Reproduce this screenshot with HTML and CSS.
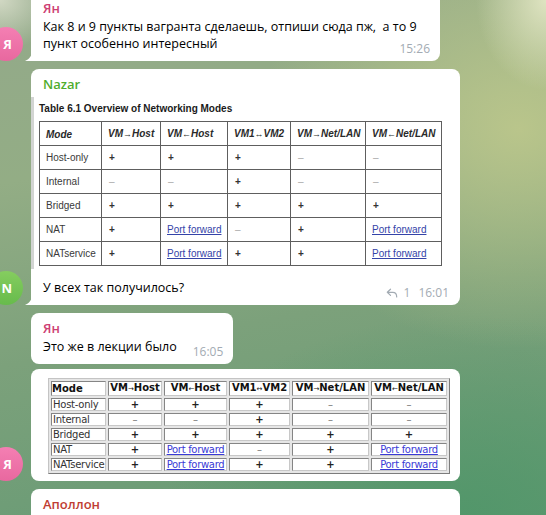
FILE: index.html
```html
<!DOCTYPE html>
<html lang="ru">
<head>
<meta charset="utf-8">
<title>Chat</title>
<link rel="stylesheet" href="styles.css">
</head>
<body>
<div class="chat">
  <div class="group group-first">
    <div class="avatar av-pink">Я</div>
    <div class="stack">
      <div class="bubble bubble-tail bubble-wide">
        <svg class="tail" width="7" height="10" viewBox="0 0 7 10"><path d="M7 0 C7 5 4 8.5 0 10 H7 Z" fill="#fff"/></svg>
        <div class="name c-pink">Ян</div>
        <div class="text">Как 8 и 9 пункты вагранта сделаешь, отпиши сюда пж,&nbsp; а то 9<br>пункт особенно интересный<span class="meta">15:26</span></div>
      </div>
    </div>
  </div>

  <div class="group">
    <div class="avatar av-green">N</div>
    <div class="stack">
      <div class="bubble bubble-tail bubble-media-caption">
        <svg class="tail" width="7" height="10" viewBox="0 0 7 10"><path d="M7 0 C7 5 4 8.5 0 10 H7 Z" fill="#fff"/></svg>
        <div class="name name-pad c-green">Nazar</div>
        <div class="shot">
          <div class="shot-title">Table 6.1 Overview of Networking Modes</div>
          <table class="doc-table">
            <tr><th class="th-mode">Mode</th><th>VM<span class="arr">→</span>Host</th><th>VM<span class="arr">←</span>Host</th><th>VM1<span class="arr">↔</span>VM2</th><th>VM<span class="arr">→</span>Net/LAN</th><th>VM<span class="arr">←</span>Net/LAN</th></tr>
            <tr><td>Host-only</td><td class="plus">+</td><td class="plus">+</td><td class="plus">+</td><td class="dash">–</td><td class="dash">–</td></tr>
            <tr><td>Internal</td><td class="dash">–</td><td class="dash">–</td><td class="plus">+</td><td class="dash">–</td><td class="dash">–</td></tr>
            <tr><td>Bridged</td><td class="plus">+</td><td class="plus">+</td><td class="plus">+</td><td class="plus">+</td><td class="plus">+</td></tr>
            <tr><td>NAT</td><td class="plus">+</td><td><span class="link">Port forward</span></td><td class="dash">–</td><td class="plus">+</td><td><span class="link">Port forward</span></td></tr>
            <tr><td>NATservice</td><td class="plus">+</td><td><span class="link">Port forward</span></td><td class="plus">+</td><td class="plus">+</td><td><span class="link">Port forward</span></td></tr>
          </table>
        </div>
        <div class="text caption">У всех так получилось?<span class="meta"><svg class="reply-ico" width="12" height="10" viewBox="0 0 12 10"><path d="M4.5 1.2 L1.3 4.3 L4.5 7.4 M1.3 4.3 H6.8 C9.4 4.3 10.7 5.9 10.7 9" fill="none" stroke="#a3abb3" stroke-width="1.2" stroke-linecap="round" stroke-linejoin="round"/></svg><span class="cnt">1</span><span>16:01</span></span></div>
      </div>
    </div>
  </div>

  <div class="group">
    <div class="avatar av-pink">Я</div>
    <div class="stack">
      <div class="bubble">
        <div class="name c-pink">Ян</div>
        <div class="text">Это же в лекции было<span class="meta meta-wide">16:05</span></div>
      </div>
      <div class="bubble bubble-media">
        <table class="html-table">
          <tr><th class="c1">Mode</th><th class="c2">VM<span class="arr2">→</span>Host</th><th class="c3">VM<span class="arr2">←</span>Host</th><th class="c4">VM1<span class="arr2">↔</span>VM2</th><th class="c5">VM<span class="arr2">→</span>Net/LAN</th><th class="c6">VM<span class="arr2">←</span>Net/LAN</th></tr>
          <tr><td class="mode">Host-only</td><td class="b">+</td><td class="b">+</td><td class="b">+</td><td class="m">–</td><td class="m">–</td></tr>
          <tr><td class="mode">Internal</td><td class="m">–</td><td class="m">–</td><td class="b">+</td><td class="m">–</td><td class="m">–</td></tr>
          <tr><td class="mode">Bridged</td><td class="b">+</td><td class="b">+</td><td class="b">+</td><td class="b">+</td><td class="b">+</td></tr>
          <tr><td class="mode">NAT</td><td class="b">+</td><td><span class="link2">Port forward</span></td><td class="m">–</td><td class="b">+</td><td><span class="link2">Port forward</span></td></tr>
          <tr><td class="mode">NATservice</td><td class="b">+</td><td><span class="link2">Port forward</span></td><td class="b">+</td><td class="b">+</td><td><span class="link2">Port forward</span></td></tr>
        </table>
      </div>
    </div>
  </div>

  <div class="group">
    <div class="avatar avatar-hidden"></div>
    <div class="stack">
      <div class="bubble bubble-last">
        <div class="name c-red">Аполлон</div>
      </div>
    </div>
  </div>
</div>
</body>
</html>
```

FILE: styles.css
```css
html, body {
  margin: 0;
  padding: 0;
  width: 546px;
  height: 515px;
  overflow: hidden;
}

body {
  font-family: "Open Sans", "Noto Sans", sans-serif;
  font-size: 12.5px;
  color: #000;
  background:
    radial-gradient(ellipse 70px 90px at 100% 0%, rgba(226, 230, 196, 0.95) 0%, rgba(226, 230, 196, 0) 100%),
    radial-gradient(ellipse 60px 50px at 0% 0%, rgba(225, 228, 210, 0.8) 0%, rgba(225, 228, 210, 0) 100%),
    radial-gradient(ellipse 260px 220px at 95% 25%, rgba(190, 200, 140, 0.9) 0%, rgba(190, 200, 140, 0) 100%),
    radial-gradient(ellipse 300px 200px at 85% 100%, rgba(80, 150, 105, 0.9) 0%, rgba(80, 150, 105, 0) 100%),
    linear-gradient(170deg, #93a98a 0%, #93ad85 30%, #7ca17b 60%, #659a74 100%);
}

.chat {
  display: flex;
  flex-direction: column;
  gap: 8px;
}

.group {
  display: flex;
  align-items: flex-end;
  gap: 8px;
}

.group-first {
  margin-top: -7px;
}

.avatar {
  flex: none;
  width: 34px;
  height: 34px;
  margin-left: -11px;
  border-radius: 50%;
  display: flex;
  align-items: center;
  justify-content: flex-end;
  padding-right: 11px;
  box-sizing: border-box;
  color: #fff;
  font-weight: 700;
  font-size: 13px;
}

.av-pink {
  background: linear-gradient(180deg, #f47fb3 0%, #e8689f 100%);
}

.av-green {
  background: linear-gradient(180deg, #85cd5f 0%, #67bb4c 100%);
}

.avatar-hidden {
  visibility: hidden;
}

.stack {
  display: flex;
  flex-direction: column;
  align-items: flex-start;
  gap: 5px;
}

.bubble {
  position: relative;
  background: #fff;
  border-radius: 8px;
  padding: 7px 10px 9px 12px;
  box-sizing: border-box;
}

.bubble-tail {
  border-bottom-left-radius: 0;
}

.tail {
  position: absolute;
  left: -6px;
  bottom: 0;
  display: block;
}

.bubble-wide {
  width: 409px;
}

.bubble-media-caption {
  width: 429px;
  padding-left: 0;
  padding-right: 0;
}

.bubble-media-caption .name-pad,
.bubble-media-caption .caption {
  padding-left: 12px;
  padding-right: 11px;
}

.bubble-media {
  width: 429px;
  padding: 9px 10px 7px 17px;
}

.bubble-last {
  width: 429px;
  padding-bottom: 30px;
}

.name {
  font-weight: 600;
  font-size: 13px;
  line-height: 17px;
  margin-bottom: 1px;
}

.c-pink { color: #cd4073; }
.c-green { color: #4fad2d; }
.c-red { color: #c03d33; }

.text {
  line-height: 17px;
}

.meta {
  float: right;
  margin: 6px 0 -6px 13px;
  font-size: 12px;
  line-height: 15px;
  color: #a3abb3;
  display: flex;
  align-items: center;
  gap: 6px;
}

.meta-wide {
  margin-left: 16px;
}

.meta .cnt {
  margin-right: 2px;
}

.reply-ico {
  display: block;
}

.caption {
  padding-top: 10px;
}

/* screenshot of the PDF table */
.shot {
  margin-top: 4px;
  background: #fff;
  border-left: 3px solid #d2d4d2;
  padding: 6px 0 4px 5px;
  height: 172px;
  box-sizing: border-box;
}

.shot-title {
  font-family: "Liberation Sans", Arial, sans-serif;
  font-weight: 700;
  font-size: 10px;
  line-height: 12px;
  color: #1a1a1a;
  margin-bottom: 6px;
}

.doc-table {
  border-collapse: collapse;
  table-layout: fixed;
  width: 402px;
  font-family: "Liberation Sans", Arial, sans-serif;
  font-size: 10px;
  line-height: 12px;
  color: #3a3a3a;
}

.doc-table th,
.doc-table td {
  border: 1px solid #5e5e5e;
  height: 24px;
  padding: 0 6px;
  text-align: left;
  vertical-align: middle;
  white-space: nowrap;
  box-sizing: border-box;
}

.doc-table th {
  font-style: italic;
  font-weight: 700;
  color: #2a2a2a;
}

.doc-table .th-mode {
  padding-top: 3px;
}

.doc-table th:nth-child(1) { width: 62px; }
.doc-table th:nth-child(2) { width: 59px; }
.doc-table th:nth-child(3) { width: 67px; }
.doc-table th:nth-child(4) { width: 63px; }
.doc-table th:nth-child(5) { width: 75px; }
.doc-table th:nth-child(6) { width: 76px; }

.arr {
  font-size: 9px;
  font-style: normal;
}

.doc-table .plus {
  font-weight: 700;
  color: #333;
  padding-left: 7px;
}

.doc-table .dash {
  color: #a8a8a8;
  padding-left: 7px;
}

.link {
  color: #3443a8;
  text-decoration: underline;
}

/* classic html table */
.html-table {
  table-layout: fixed;
  width: 402px;
  border-spacing: 2px;
  border: 1px solid;
  border-color: #c4c4c4 #7c7c7c #7c7c7c #c4c4c4;
  background: #e6e6e6;
  font-family: "DejaVu Sans", Verdana, sans-serif;
  font-size: 10px;
  line-height: 11px;
  color: #222;
}

.html-table th,
.html-table td {
  box-sizing: border-box;
  border: 1px solid;
  border-color: #858585 #c8c8c8 #c8c8c8 #858585;
  background: #fff;
  padding: 0;
  text-align: center;
  white-space: nowrap;
  overflow: hidden;
}

.html-table th {
  font-weight: 700;
  color: #111;
}

.html-table th.c1 { text-align: left; width: 55px; }
.html-table th.c2 { width: 54px; }
.html-table th.c3 { width: 63px; }
.html-table th.c4 { width: 61px; }
.html-table th.c5 { width: 77px; }
.html-table th.c6 { width: 76px; }

.arr2 {
  font-size: 7px;
  font-weight: 400;
}

.html-table .mode {
  text-align: left;
  padding-left: 1px;
  color: #333;
  letter-spacing: -0.25px;
}

.html-table .b {
  font-weight: 700;
}

.html-table .m {
  color: #777;
}

.link2 {
  color: #3a3ad6;
  text-decoration: underline;
  letter-spacing: -0.3px;
}
```
